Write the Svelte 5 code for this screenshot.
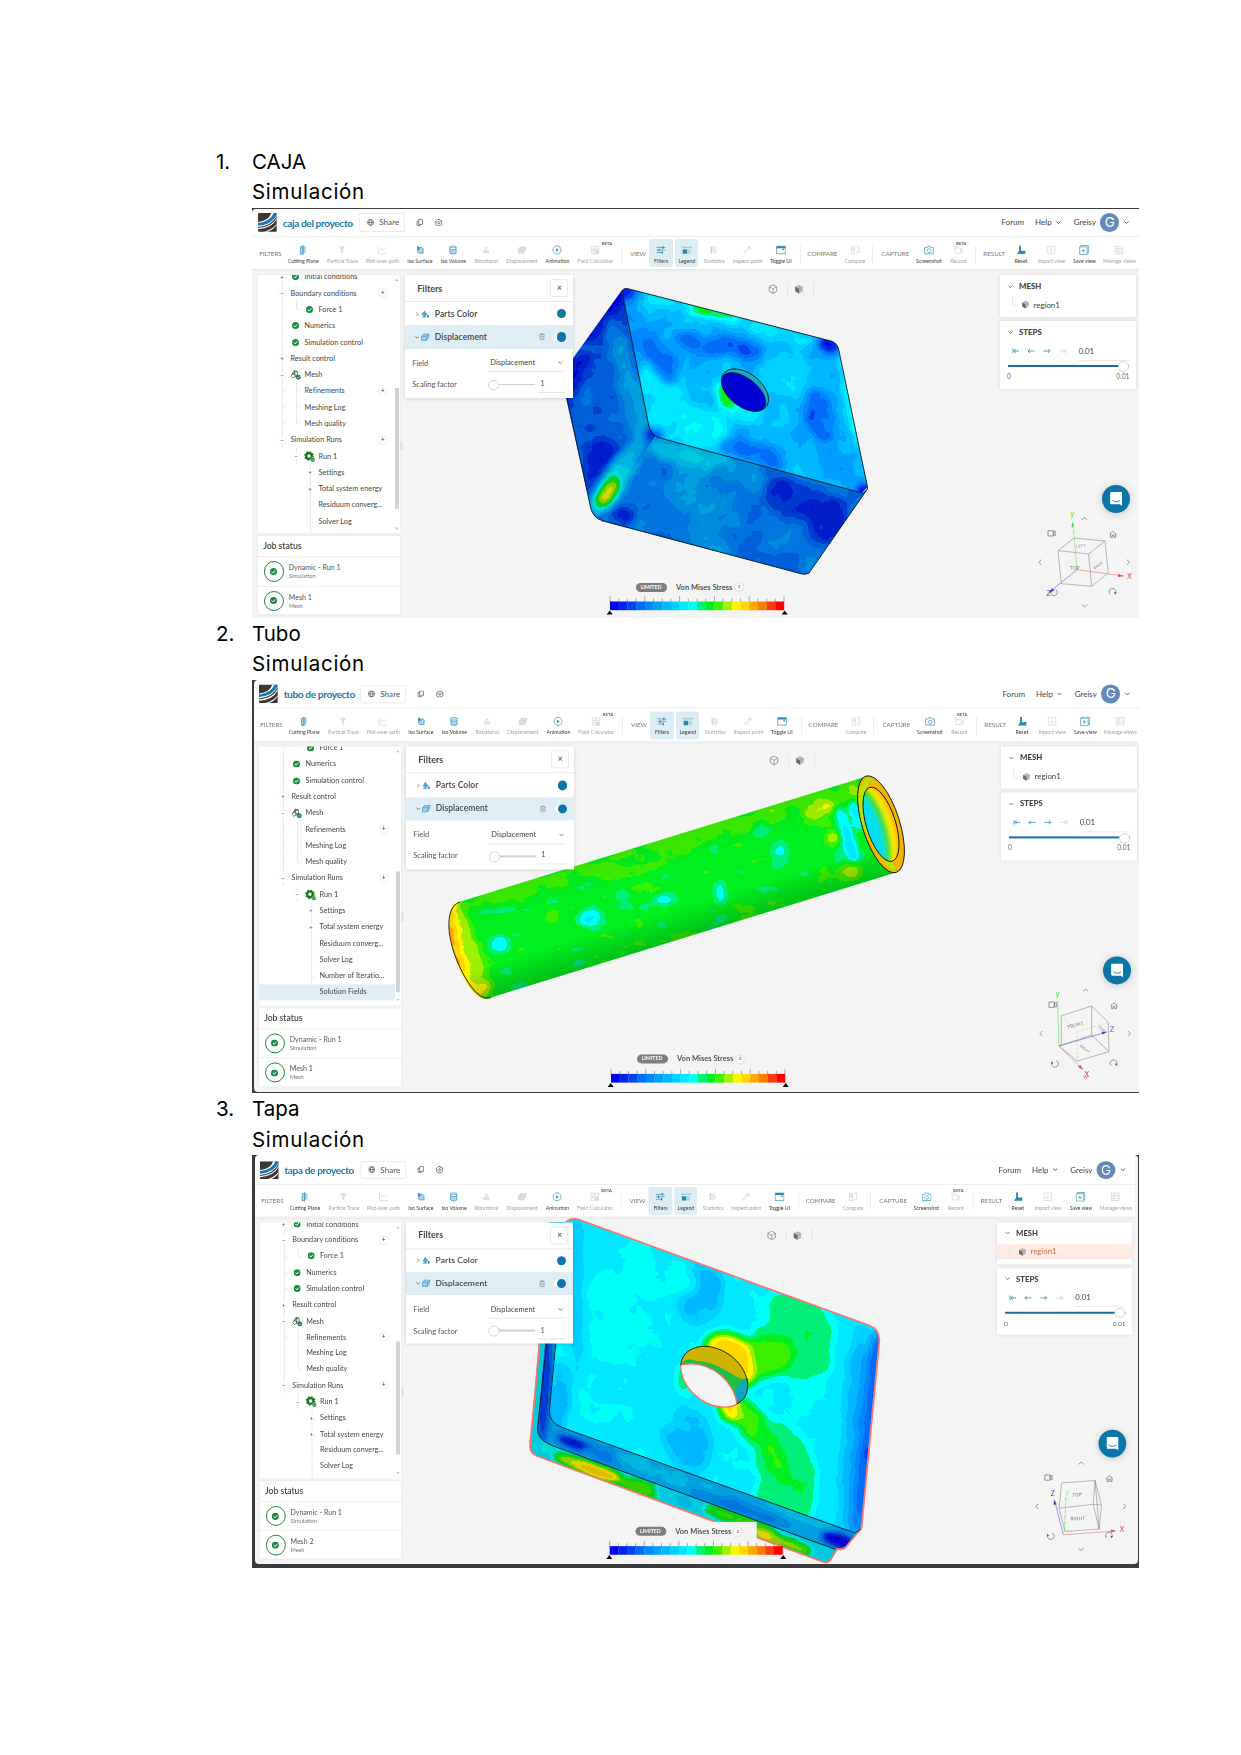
<script>
  const bands = ['#0000f0', '#0024e8', '#0044f0', '#006cf8', '#0088ff', '#00a0ff', '#00b8ff', '#00d0ff', '#00e8ff', '#00fff6', '#00f078', '#00f01e', '#3cf000', '#a0f000', '#fff400', '#ffd800', '#ffa800', '#ff7c00', '#f83c10', '#ff0000'];
  const chan = (o) => bands.map((b) => (parseInt(b.slice(o, o + 2), 16) / 255).toFixed(3)).join(' ');
  const red = chan(1), green = chan(3), blue = chan(5);
  const grey = (v) => { const n = Math.round(v * 255); return `rgb(${n},${n},${n})`; };

  // kind: s = section caption, | = divider, on / off / active = tool state
  const tools = [
    ['s', 'FILTERS', 26], ['on', 'Cutting Plane', 39.4, 'plane'], ['off', 'Particle Trace', 39.2, 'trace'], ['off', 'Plot-over-path', 40.8, 'plot'],
    ['on', 'Iso Surface', 34.2, 'surface'], ['on', 'Iso Volume', 32.8, 'volume'], ['off', 'Rotational', 32.6, 'rotate'], ['off', 'Displacement', 38.6, 'sheet'],
    ['on', 'Animation', 32.8, 'play'], ['off', 'Field Calculator', 42.6, 'calc', 'BETA'], ['|', '', 10], ['s', 'VIEW', 23],
    ['active', 'Filters', 23.5, 'sliders'], ['gap', '', 2.3], ['active', 'Legend', 23.2, 'legend'], ['off', 'Statistics', 31.4, 'stats'], ['off', 'Inspect point', 35.2, 'picker'],
    ['on', 'Toggle UI', 31.8, 'window'], ['|', '', 6.6], ['s', 'COMPARE', 38], ['off', 'Compare', 27, 'compare'], ['|', '', 9], ['s', 'CAPTURE', 36],
    ['on', 'Screenshot', 31, 'camera'], ['off', 'Record', 28, 'record', 'BETA'], ['|', '', 5.5], ['s', 'RESULT', 32.5], ['on', 'Reset', 21, 'reset'],
    ['off', 'Import view', 40, 'import'], ['on', 'Save view', 26, 'save'], ['off', 'Manage views', 44, 'manage']
  ];

  // each icon: [stroked path, filled path, tinted path] on a 16 unit grid
  const icons = {
    plane: ['M8 0v16M4 3l4-1v12l-4 1z', '', 'M4 3l4-1v12l-4 1zM8.500 2.500l4-1v11l-4 1z'],
    trace: ['', 'M6 6h4l-1 7H7z', 'M4 2h8v4H4zM6 6h4l-1 7H7z'],
    plot: ['M2 2v12h13M4 10l3-5 3 4 4-5', '', ''],
    surface: ['M4 2v9l2 2h7V6l-2-2H7z', 'M4 2l3 2v4l-3-1z', 'M4 2l3 2h4l2 2v7H6l-2-2z'],
    volume: ['M3 3v10c2 2 8 2 10 0V3M3 3c2 2 8 2 10 0M3 3c2-2 8-2 10 0M3 6c2 2 8 2 10 0', '', 'M3 6c2 2 8 2 10 0v7c-2 2-8 2-10 0z'],
    rotate: ['', 'M6 3h4v4H6zM5 9h6v3H5z', 'M3 8h10v5H3z'],
    sheet: ['M2 7l3-4h9l-1 6-3 4H2zM2 7h9l3-4M11 7l-1 6', '', 'M2 7l3-4h9l-1 6-3 4H2z'],
    play: ['M8 1.500a6.500 6.500 0 1 0 .1 0z', 'M6.500 5v6l4-3z', ''],
    calc: ['M2 2h5v5H2zM9 2h5v5H9zM2 9h5v5H2zM9 9h5v5H9z', '', 'M9 9h5v5H9z'],
    sliders: ['M1 4h14M1 8h14M1 12h10', 'M10 2h2v4h-2zM4 6h2v4H4zM9 10h2v4H9z', ''],
    legend: ['M2 2v3M5 3v2M8 3v2M11 3v2M14 2v3', 'M1 7h7v7H1z', 'M8 7h6v7H8z'],
    stats: ['M4 2v12M6 3h4v3H6zM6 8h6v3H6zM7 13h3', '', 'M2 3h3v10H2z'],
    picker: ['M3 13l1-3 6-6 2 2-6 6z', 'M9 3l2-2 4 4-3 2z', ''],
    window: ['M1 2h14v12H1z', 'M1 2h14v3H1zM10 6h3v2h-3z', ''],
    compare: ['M2 2h5v12H2zM10 2h4v10h-4', '', 'M3 4h3v5H3z'],
    camera: ['M1 4h4l1-2h4l1 2h4v10H1zM8 6a3 3 0 1 0 .1 0', '', ''],
    record: ['M3 5h9v8H3zM1 4V2h8M12 8l3-1v5l-3-1', '', ''],
    reset: ['M2 14h12', 'M5 1h3v7l4 3v3H2l3-5zM11 9h4v5h-4z', ''],
    import: ['M2 2h12v12H2zM8 4v7M5 8l3 3 3-3', '', ''],
    save: ['M1 3h12v12H1zM3 3V1h12v12h-2M7 6v6M4 9h6', '', ''],
    manage: ['M2 2h12v12H2zM2 6h12M2 10h12M6 2v12', '', '']
  };

  // slot letters: - / + expander, l guide, L guide corner, c check, m mesh, g gear, _ blank
  const head = [['+c', 'Initial conditions'], ['-', 'Boundary conditions', 1], ['lLc', 'Force 1']];
  const middle = [['lc', 'Numerics'], ['lc', 'Simulation control'], ['+', 'Result control'], ['-m', 'Mesh'], ['ll', 'Refinements', 1], ['ll', 'Meshing Log'], ['lL', 'Mesh quality'], ['-', 'Simulation Runs', 1], ['_-g', 'Run 1'], ['__+', 'Settings'], ['__+', 'Total system energy'], ['__l', 'Residuum converg...'], ['__l', 'Solver Log']];
  const tail = [['__l', 'Number of Iteratio...'], ['__L', 'Solution Fields', 0, 1]];

  const screens = [
    { id: 'caja', n: 1, name: 'CAJA', title: 'caja del proyecto', rows: [...head, ...middle, ['__l', '']], jobs: ['Mesh 1'] },
    { id: 'tubo', n: 2, name: 'Tubo', title: 'tubo de proyecto', rows: [['lLc', 'Force 1'], ...middle, ...tail], jobs: ['Mesh 1'] },
    { id: 'tapa', n: 3, name: 'Tapa', title: 'tapa de proyecto', rows: [...head, ...middle, ['__l', '']], jobs: ['Mesh 2'] }
  ];

  // scalar blobs: cx, cy, rx, ry, angle, value
  const boxTop = [
    [640, 345, 10, 48, -14, .24], [665, 398, 22, 42, -25, .42], [688, 425, 44, 22, 15, .44], [700, 345, 30, 10, 15, .18], [738, 347, 26, 10, 18, .17], [664, 360, 13, 28, -18, .18],
    [664, 330, 12, 12, 0, .3], [705, 311, 62, 7, 15, .45], [714, 312, 27, 5, 15, .62], [775, 332, 40, 9, 16, .39], [745, 402, 24, 22, 0, .43], [725, 396, 8, 14, -30, .6], [775, 385, 22, 22, 0, .38], [790, 365, 24, 10, 10, .37],
    [820, 415, 15, 28, -15, .17], [752, 453, 36, 12, 14, .18], [800, 450, 18, 18, 0, .3], [780, 425, 14, 18, 0, .36], [852, 400, 7, 50, -12, .46], [853, 420, 3.5, 24, -12, .6],
    [830, 345, 12, 8, 30, .06], [622, 292, 16, 9, 0, .06], [866, 490, 10, 7, 0, .02], [720, 460, 40, 4, 15, .44], [838, 466, 14, 14, 0, .25], [655, 434, 7, 6, 0, .1]
  ];
  const boxLeft = [[605, 315, 9, 34, 35, .03], [578, 372, 7, 24, 25, .04], [615, 350, 9, 40, -5, .2], [637, 410, 10, 42, -10, .42], [628, 385, 9, 50, -10, .3], [598, 410, 20, 22, 0, .19], [605, 460, 20, 20, 0, .07], [590, 480, 6, 16, -10, .09], [616, 478, 12, 44, 33, .46], [608, 494, 9, 17, 30, .74], [633, 455, 8, 20, 35, .36], [596, 510, 9, 6, 0, .4], [652, 434, 9, 6, 0, .1]];
  const boxFront = [[690, 455, 50, 12, 15, .39], [690, 490, 28, 26, 10, .3], [715, 520, 26, 38, -5, .29], [650, 490, 10, 22, 30, .21], [655, 525, 26, 12, 15, .22], [800, 500, 38, 20, 15, .1], [830, 520, 20, 24, 25, .08], [760, 545, 38, 16, 14, .2], [624, 515, 10, 6, 15, .07], [740, 475, 28, 10, 15, .28], [616, 478, 12, 44, 33, .46], [608, 494, 9, 17, 30, .74]];
  const tube = [[458, 940, 16, 58, -17, .8], [472, 990, 18, 14, -20, .74], [470, 950, 9, 48, -17, .68], [560, 878, 110, 8, -17, .62], [740, 822, 130, 10, -17, .62], [820, 810, 16, 8, -17, .7], [833, 838, 7, 6, 0, .72], [850, 795, 10, 24, -17, .65], [590, 918, 12, 8, -10, .44], [500, 945, 10, 9, 0, .46], [622, 895, 8, 5, -20, .46], [665, 898, 10, 6, 0, .46], [780, 855, 9, 13, 0, .46], [760, 832, 7, 5, 0, .46], [720, 893, 5, 12, 0, .46], [847, 835, 6, 28, -17, .4], [856, 815, 5, 16, -17, .4], [850, 872, 12, 9, 0, .68], [700, 940, 190, 5, -17, .62], [640, 868, 40, 7, -17, .6]];
  const plate = [
    [577, 1290, 5, 90, 0, .33], [558, 1400, 12, 40, 5, .33], [620, 1310, 34, 60, 10, .46], [700, 1293, 24, 33, 10, .34], [650, 1270, 50, 20, 20, .46], [687, 1440, 24, 36, -20, .34], [665, 1400, 16, 30, 0, .41],
    [800, 1325, 30, 42, -30, .53], [792, 1350, 42, 28, 20, .535], [762, 1358, 34, 20, -10, .62], [728, 1350, 24, 16, 15, .76], [745, 1365, 9, 22, -10, .77], [735, 1409, 15, 13, 20, .78], [756, 1428, 13, 32, -30, .63],
    [785, 1465, 28, 46, -22, .53], [785, 1500, 30, 28, 0, .54], [775, 1455, 9, 30, -25, .6], [830, 1395, 42, 20, 0, .46], [838, 1440, 13, 100, 3, .42], [853, 1430, 10, 110, 4, .32], [864, 1440, 8, 110, 5, .22], [875, 1400, 5, 80, 5, .1], [865, 1480, 4, 55, 5, .1], [682, 1380, 5, 15, 0, .55]
  ];
  const rim = [[545, 1390, 7, 60, 4, .12], [578, 1445, 24, 5, 20, .02], [610, 1458, 30, 6, 20, .22], [670, 1476, 60, 9, 20, .36], [740, 1508, 55, 5, 20, .22], [800, 1515, 40, 4, 20, .42], [840, 1541, 20, 7, 18, .01]];
  const skirt = [[550, 1450, 18, 9, 20, .45], [590, 1468, 38, 7, 19, .72], [598, 1474, 22, 5, 19, .8], [640, 1488, 24, 9, 20, .62], [680, 1500, 28, 7, 20, .4], [740, 1520, 38, 9, 20, .6], [775, 1540, 25, 6, 20, .78], [790, 1545, 25, 6, 20, .68], [822, 1553, 12, 12, 20, .42]];
</script>

{#snippet blobs(list, soft)}
  <g filter="url(#{soft})">
    {#each list as [cx, cy, rx, ry, a, v]}
      <ellipse {cx} {cy} {rx} {ry} transform="rotate({a} {cx} {cy})" fill={grey(v)} />
    {/each}
  </g>
{/snippet}

{#snippet fieldFilter(id, freq, gain, seed, x, y, w, h)}
  <filter {id} filterUnits="userSpaceOnUse" {x} {y} width={w} height={h} color-interpolation-filters="sRGB">
    <feTurbulence type="fractalNoise" baseFrequency={freq} numOctaves="3" {seed} result="n" />
    <feColorMatrix in="n" type="matrix" values="1 0 0 0 0 1 0 0 0 0 1 0 0 0 0 0 0 0 0 1" result="m" />
    <feComposite in="SourceGraphic" in2="m" operator="arithmetic" k1="0" k2="1" k3={gain} k4={-gain / 2} />
    <feComponentTransfer>
      <feFuncR type="discrete" tableValues={red} />
      <feFuncG type="discrete" tableValues={green} />
      <feFuncB type="discrete" tableValues={blue} />
    </feComponentTransfer>
    <feGaussianBlur stdDeviation=".5" />
  </filter>
{/snippet}

{#snippet cajaModel()}
  <svg class="model" viewBox="252 208 887 412">
    <defs>
      {@render fieldFilter('fCaja', '.038', .17, 4, 550, 270, 340, 320)}
      <filter id="sCaja" x="-20%" y="-20%" width="140%" height="140%" color-interpolation-filters="sRGB"><feGaussianBlur stdDeviation="4" /></filter>
      <clipPath id="cTop"><path d="M622 291Q623 288 627 288.500L832 341.300Q838 344 839 351L867.500 487 862 493 662 438.500Q651 436 649 427Z" /></clipPath>
      <clipPath id="cLeft"><path d="M622 290L566 368V398L590.500 507Q593 518 602 520.500L656 437 649 427Z" /></clipPath>
      <clipPath id="cFront"><path d="M601 521L655 436 662 438.500 862 493 867.500 489 809 573Q806 575 802 574Z" /></clipPath>
    </defs>
    <g clip-path="url(#cLeft)"><g filter="url(#fCaja)"><rect x="550" y="270" width="340" height="320" fill={grey(.16)} />{@render blobs(boxLeft, 'sCaja')}</g><rect x="550" y="270" width="340" height="320" class="shade" /></g>
    <g clip-path="url(#cFront)"><g filter="url(#fCaja)"><rect x="550" y="270" width="340" height="320" fill={grey(.22)} />{@render blobs(boxFront, 'sCaja')}</g><rect x="550" y="270" width="340" height="320" class="shade" /></g>
    <g clip-path="url(#cTop)"><g filter="url(#fCaja)"><rect x="550" y="270" width="340" height="320" fill={grey(.32)} />{@render blobs(boxTop, 'sCaja')}</g></g>
    <g class="edge">
      <path d="M622 291Q623 288 627 288.500L832 341.300Q838 344 839 351L867.500 487Q868 489 866 491L809 573Q806 575 802 574L602 520.500Q593 518 590.500 507L567 398" />
      <path d="M622 291L649 427Q651 436 662 438.500L862 493" />
    </g>
    <ellipse cx="745" cy="390" rx="27" ry="16.500" transform="rotate(38 745 390)" fill="#19a8bd" stroke="#101820" stroke-width=".8" />
    <ellipse cx="743.500" cy="392" rx="26" ry="14" transform="rotate(38 743.500 392)" fill="#0000d2" stroke="#101820" stroke-width=".6" />
  </svg>
{/snippet}

{#snippet tuboModel()}
  <svg class="model" viewBox="252 680 887 412">
    <defs>
      {@render fieldFilter('fTubo', '.03 .06', .12, 9, 430, 760, 490, 250)}
      <filter id="sTubo" x="-20%" y="-20%" width="140%" height="140%" color-interpolation-filters="sRGB"><feGaussianBlur stdDeviation="3.500" /></filter>
      <filter id="b3"><feGaussianBlur stdDeviation="2.200" /></filter>
      <clipPath id="cTube"><path d="M459 902L868 776A18.700 50.500 -17.500 0 1 895 872.700L486 999A18.700 50.500 -17.500 0 1 459 902Z" /></clipPath>
      <clipPath id="cBore"><ellipse cx="881" cy="824.300" rx="14.700" ry="38.600" transform="rotate(-17 881 824.300)" /></clipPath>
      <linearGradient id="gTube" gradientUnits="userSpaceOnUse" x1="660" y1="838" x2="690" y2="937">
        <stop offset="0" stop-opacity=".05" /><stop offset=".3" stop-opacity="0" /><stop offset=".7" stop-opacity="0" /><stop offset="1" stop-opacity=".2" />
      </linearGradient>
    </defs>
    <g clip-path="url(#cTube)">
      <g filter="url(#fTubo)"><rect x="430" y="760" width="490" height="250" fill={grey(.578)} />{@render blobs(tube, 'sTubo')}</g>
      <rect x="430" y="760" width="490" height="250" fill="url(#gTube)" />
    </g>
    <ellipse cx="881" cy="824.300" rx="18.700" ry="50.500" transform="rotate(-17.500 881 824.300)" fill="#f4b400" />
    <path d="M868 777Q853 790 861 818T893 872L896 868Q874 846 868 812T875 780Z" fill="#b4e600" />
    <g clip-path="url(#cBore)">
      <rect x="855" y="780" width="50" height="90" fill="#ffb000" />
      <g filter="url(#b3)">
        <ellipse cx="876" cy="828" rx="17" ry="44" transform="rotate(-17 876 828)" fill="#ffee00" />
        <ellipse cx="872.500" cy="829" rx="15" ry="44" transform="rotate(-17 872.500 829)" fill="#30e020" />
        <ellipse cx="868" cy="832" rx="13.500" ry="40" transform="rotate(-17 868 832)" fill="#00e0f0" />
      </g>
    </g>
    <g class="edge">
      <ellipse cx="881" cy="824.300" rx="18.700" ry="50.500" transform="rotate(-17.500 881 824.300)" />
      <ellipse cx="881" cy="824.300" rx="14.700" ry="38.600" transform="rotate(-17 881 824.300)" />
      <path d="M460 902C446 906 445 933 458 963C468 986 480 1001 491 997.500" />
    </g>
  </svg>
{/snippet}

{#snippet tapaModel()}
  <svg class="model" viewBox="252 1155 887 412">
    <defs>
      {@render fieldFilter('fTapa', '.04', .06, 3, 520, 1210, 370, 360)}
      <filter id="sTapa" x="-20%" y="-20%" width="140%" height="140%" color-interpolation-filters="sRGB"><feGaussianBlur stdDeviation="5" /></filter>
      <filter id="sRim" x="-20%" y="-20%" width="140%" height="140%" color-interpolation-filters="sRGB"><feGaussianBlur stdDeviation="3" /></filter>
      <clipPath id="cPlate"><path d="M566 1222Q572 1217 580 1220L868 1325Q880 1329 879 1341L861.500 1528 855 1533 562 1427.500Q549 1423 549.500 1410Z" /></clipPath>
      <clipPath id="cRim"><path d="M555 1222L537.500 1428Q537 1440 552 1445.500L835 1549.300H843L861.500 1528 855 1533 562 1427.500Q549 1423 549.500 1410L566 1222Z" /></clipPath>
      <clipPath id="cSkirt"><path d="M549 1222L530 1446Q530 1453 537 1456L822 1561.500Q828 1564 831 1559L837 1549 552 1445.500Q537 1440 537.500 1428L555 1222Z" /></clipPath>
    </defs>
    <g clip-path="url(#cSkirt)"><g filter="url(#fTapa)"><rect x="520" y="1210" width="370" height="360" fill={grey(.42)} />{@render blobs(skirt, 'sRim')}</g><rect x="520" y="1210" width="370" height="360" class="shade" /></g>
    <g clip-path="url(#cRim)"><g filter="url(#fTapa)"><rect x="520" y="1210" width="370" height="360" fill={grey(.32)} />{@render blobs(rim, 'sRim')}</g><rect x="520" y="1210" width="370" height="360" class="shade" /></g>
    <g clip-path="url(#cPlate)"><g filter="url(#fTapa)"><rect x="520" y="1210" width="370" height="360" fill={grey(.445)} />{@render blobs(plate, 'sTapa')}</g></g>
    <path d="M566 1222Q572 1217 580 1220L868 1325Q880 1329 879.300 1341L861.500 1528 846 1547Q843 1550 837 1549L831 1559Q828 1564 822 1561.500L537 1456Q530 1453 530 1446L541 1330" class="halo" />
    <g class="edge">
      <path d="M547 1340L537.500 1428Q537 1440 552 1445.500L835 1549.300M556 1340L549.500 1410Q549 1423 562 1427.500L855 1533 861 1529" />
    </g>
    <path d="M680.700 1365C682 1352 693 1346 706 1346.300C730 1348 749 1369 747.700 1388Q746 1400 736.700 1404C736 1385 712 1358 680.700 1365Z" fill="#cdb400" />
    <path d="M680.700 1365Q686 1356 697 1361C724 1362 738 1384 748 1378Q750 1398 736.700 1404C736 1385 712 1358 680.700 1365Z" fill="#1fbf45" />
    <path d="M735 1389L745 1378 747.700 1388Q746 1400 736.700 1404Z" fill="#12a5c0" />
    <path d="M736.700 1404C736 1385 712 1358 680.700 1365C680 1384 699 1406 722 1407Q732 1407.500 736.700 1404Z" fill="#f4f4f4" stroke="#f0705c" stroke-width="1.200" />
    <path d="M680.700 1365C682 1352 693 1346 706 1346.300C730 1348 749 1369 747.700 1388Q746 1400 736.700 1404" class="edge" />
  </svg>
{/snippet}

{#snippet cube(id)}
  {#if id === 'caja'}
    <g class="wire"><path d="M235 243L283 205 376 214 327 253ZM235 243L245 342 336 350 327 253M376 214L386 310 336 350" /></g>
    <path d="M292 300L280 160" class="ax g" stroke-dasharray="18 3" /><path d="M275 172l4-16 4 15z" fill="#4bd44b" />
    <path d="M292 300L432 319" class="ax r" /><path d="M415 313l18 6-18 3z" fill="#e05050" /><path d="M292 300L212 365" class="ax b" /><path d="M217 355l-8 14 16-7z" fill="#4848c0" />
    <text x="277" y="143" class="al" fill="#3fe03f">y</text><text x="450" y="329" class="al" fill="#e84848">X</text><text x="207" y="378" class="al" fill="#3838c0">Z</text>
    <text x="285" y="302" class="face">TOP</text><text transform="translate(304 233) rotate(-4)" class="face sm">LEFT</text><text transform="translate(358 290) rotate(-38)" class="face sm">BACK</text>
  {:else if id === 'tubo'}
    <g class="wire"><path d="M242 224L333 195 333 282 235 315 242 312ZM333 195L383 244 385 332 333 282M385 332L290 360 235 315" /><path d="M242 224L290 272 383 244M290 272V360" stroke-dasharray="6 6" stroke-opacity=".5" /></g>
    <path d="M235 315L231 180" class="ax g" /><path d="M235 315L378 273" class="ax b" /><path d="M362 272l18 0-14 8z" fill="#4848c0" /><path d="M235 315L305 384" class="ax r" /><path d="M292 378l16 9-9-16z" fill="#e05050" />
    <text x="231" y="169" class="al" fill="#3fe03f">y</text><text x="394" y="273" class="al" fill="#5050d0">Z</text><text x="318" y="408" class="al" fill="#e84848">X</text>
    <text transform="translate(286 257) rotate(-15)" class="face">FRONT</text><text transform="translate(310 327) rotate(40)" class="face sm">RIGHT</text><text transform="translate(360 266) rotate(45)" class="face sm">TOP</text>
  {:else}
    <g class="wire"><path d="M256 207L357 200 351 272 248 284ZM357 200L376 274 369 347 266 354 248 284M351 272L369 347M351 272L376 274M357 200L369 347" /></g>
    <path d="M261 364L234 259" class="ax b" /><path d="M231 274l2-17 8 15z" fill="#4848c0" /><path d="M264 354L269 249" class="ax g" stroke-dasharray="14 4" /><path d="M261 364L418 353" class="ax r" /><path d="M404 348l16 4-15 5z" fill="#e05050" />
    <text x="229" y="248" class="al" fill="#4040d0">Z</text><text x="273" y="240" class="al" fill="#8be88b">y</text><text x="438" y="357" class="al" fill="#e84848">X</text>
    <text transform="translate(303 248) rotate(-3)" class="face">TOP</text><text transform="translate(305 320) rotate(-3)" class="face">RIGHT</text>
  {/if}
{/snippet}

{#snippet chevron(dir = 'down')}
  <svg class="chev {dir}" viewBox="0 0 10 10"><path d="M1 3l4 4 4-4" /></svg>
{/snippet}

{#snippet check()}
  <svg class="check" viewBox="0 0 14 14"><circle cx="7" cy="7" r="7" fill="#1c8a43" /><path d="M3.500 7l2.700 2.700 4.500-5" fill="none" stroke="#fff" stroke-width="2" /></svg>
{/snippet}

{#snippet boxIcon(solid)}
  <svg class="boxicon" viewBox="0 0 16 16"><path d="M8 1l6 3.500v7L8 15l-6-3.500v-7z" fill={solid ? '#b9b9b9' : 'none'} stroke={solid ? 'none' : '#666'} /><path d="M2 4.500L8 8v7l-6-3.500z" fill={solid ? '#6a6a6a' : 'none'} /><path d="M2 4.500L8 8l6-3.500M8 8v7" fill="none" stroke="#777" stroke-width={solid ? .5 : 1} /></svg>
{/snippet}

<main>
  {#each screens as s}
    <section class={s.id}>
      <div class="line"><span class="num">{s.n}.</span><span>{s.name}</span></div>
      <div class="line"><span class="num"></span><span class="sub">Simulación</span></div>
      <div class="frame">
        {#if s.id === 'caja'}{@render cajaModel()}{:else if s.id === 'tubo'}{@render tuboModel()}{:else}{@render tapaModel()}{/if}
        <div class="stage">
          <header>
            <svg class="logo" viewBox="0 0 56 56">
              <rect width="56" height="56" rx="3" fill="#3b3735" />
              <path d="M0 27Q32 24 40 0H56V8Q42 38 0 42Z" fill="#fff" /><path d="M0 30Q36 26 47 0H56V5Q42 35 0 38Z" fill="#1a78b4" />
              <path d="M0 45Q42 42 56 14V18Q42 46 0 49ZM18 56Q42 50 56 33V37Q46 50 30 56Z" fill="#fff" />
            </svg>
            <b class="title">{s.title}</b>
            <div class="share"><svg viewBox="0 0 14 14"><circle cx="7" cy="7" r="6" /><path d="M1 7h12M7 1c-4 4-4 8 0 12c4-4 4-8 0-12" /></svg>Share</div>
            <svg class="hicon" viewBox="0 0 14 14"><path d="M5 1h7v9H5zM5 4H2v8h6v-2" /></svg>
            <svg class="hicon gearout" viewBox="0 0 14 14"><path d="M5 1h4l1 2h2l1 3-1 2 1 2-2 2H9l-2 1-2-1H3l-2-2 1-2-1-3 2-2 1-1zM7 5a2 2 0 1 0 .1 0z" /></svg>
            <div class="account"><span class="forum">Forum</span><span class="help">Help</span>{@render chevron()}<span class="user">Greisy</span><i>G</i>{@render chevron()}</div>
          </header>
          <nav>
            {#each tools as [kind, label, w, icon, badge]}
              <div class="tool k{kind === 's' ? 'cap' : kind === '|' ? 'div' : kind}" style:width="{w}px">
                {#if icon}
                  <svg viewBox="0 0 16 16"><path d={icons[icon][2]} class="tint" /><path d={icons[icon][1]} class="solid" /><path d={icons[icon][0]} class="out" /></svg>
                {/if}
                {#if badge}<em>{badge}</em>{/if}
                {#if label}<span>{label}</span>{/if}
              </div>
            {/each}
          </nav>
          <div class="work">
            <aside>
              <div class="tree">
                <div class="rows">
                  {#each s.rows as [slots, label, add, sel]}
                    <div class="row" class:sel>
                      {#each slots.split('') as c}
                        <span class="slot" class:guide={c === 'l'} class:corner={c === 'L'} class:node={c === '-' || c === '+'}>
                          {#if c === '-' || c === '+'}<u>{c === '-' ? '−' : '+'}</u>
                          {:else if c === 'c'}{@render check()}
                          {:else if c === 'm'}
                            <svg class="big" viewBox="0 0 20 20"><path d="M4 9l4-6 5 1 1 8-9 4-3-3zM4 9l10 3M8 3l1 11M4 9l9-5" fill="none" stroke="#3c5a44" stroke-width="1.400" /><circle cx="15" cy="15" r="4.500" fill="#1c8a43" /><path d="M13 15l1.500 1.500 2.500-3" fill="none" stroke="#fff" /></svg>
                          {:else if c === 'g'}
                            <svg class="big" viewBox="0 0 20 20"><circle cx="9" cy="9" r="5.200" fill="none" stroke="#147a1e" stroke-width="4" /><circle cx="9" cy="9" r="7.600" fill="none" stroke="#147a1e" stroke-width="2.400" stroke-dasharray="3 2.970" /><circle cx="16" cy="16" r="4" fill="#1c8a43" stroke="#fff" stroke-width=".6" /><path d="M14 16l1.500 1.500 2.500-3" fill="none" stroke="#fff" /></svg>
                          {/if}
                        </span>
                      {/each}
                      <span class="lbl">{label}</span>
                      {#if add}<span class="add">+</span>{/if}
                    </div>
                  {/each}
                </div>
                <div class="scroll"><svg viewBox="0 0 6 6"><path d="M0 5l3-4 3 4z" /></svg><div class="thumb"></div><svg viewBox="0 0 6 6"><path d="M0 1l3 4 3-4z" /></svg></div>
              </div>
              <div class="jobs">
                <h3>Job status</h3>
                {#each [['Dynamic - Run 1', 'Simulation'], [s.jobs[0], 'Mesh']] as [a, b]}
                  <div class="job"><span class="ring">{@render check()}</span><div><p>{a}</p><small>{b}</small></div></div>
                {/each}
              </div>
            </aside>
            <div class="grip"></div>
            <div class="filters">
              <div class="fhead"><b>Filters</b><span class="close">×</span></div>
              <div class="frow">{@render chevron('east')}<svg class="fi" viewBox="0 0 16 16"><path d="M1 8l6-6 5 6-5 5z" fill="#5aa7cc" /><path d="M4 5l4-4M12 9l2 4M2 13h8" stroke="#2d7fae" fill="none" stroke-width="1.500" /><circle cx="13" cy="12" r="2" fill="#2d7fae" /></svg><b>Parts Color</b><span class="dot"></span></div>
              <div class="frow picked">{@render chevron()}<svg class="fi" viewBox="0 0 16 16"><path d="M1 6l4-4h10l-1 7-4 5H1z" fill="#9fd0ea" stroke="#2d86b8" /><path d="M1 6h10l4-4M11 6l-1 8" fill="none" stroke="#2d86b8" /></svg><b>Displacement</b><svg class="bin" viewBox="0 0 12 14"><path d="M1 3h10M2 3v10h8V3M4 3V1h4v2M4.500 5.500v5M7.500 5.500v5" /></svg><span class="dot"></span></div>
              <div class="prop field"><span>Field</span><div class="select">Displacement{@render chevron()}</div></div>
              <div class="prop"><span>Scaling factor</span><div class="slider"></div><div class="value">1</div></div>
            </div>
            <div class="right">
              <div class="card mesh">
                <div class="chead">{@render chevron()}<b>MESH</b></div>
                <div class="region"><span class="elbow"></span>{@render boxIcon(true)}region1</div>
              </div>
              <div class="card steps">
                <div class="chead">{@render chevron()}<b>STEPS</b></div>
                <div class="arrows">
                  <svg viewBox="0 0 16 12"><path d="M2 1v10M15 6H4M8 2L4 6l4 4" /></svg><svg viewBox="0 0 16 12"><path d="M15 6H2M6 2L2 6l4 4" /></svg><svg viewBox="0 0 16 12"><path d="M1 6h13M10 2l4 4-4 4" /></svg><svg class="dim" viewBox="0 0 16 12"><path d="M1 6h11M8 2l4 4-4 4M14 1v10" /></svg>
                  <span>0.01</span>
                </div>
                <div class="range"></div>
                <div class="ends"><span>0</span><span>0.01</span></div>
              </div>
            </div>
          </div>
          <div class="viewtools">{@render boxIcon(false)}<hr />{@render boxIcon(true)}<hr /></div>
          <div class="legend">
            <div class="caption"><span class="pill">LIMITED</span><span>Von Mises Stress</span><span class="menu">≡</span></div>
            <svg viewBox="0 0 184 19">
              {#each Array(21) as _, i}<path d="M{5 + i * 8.7} {i % 4 === 0 ? 0 : 2.500}V6" stroke="#777" stroke-width=".6" />{/each}
              {#each bands as c, i}<rect x={5 + i * 8.7} y="5.500" width="8.900" height="8.700" fill={c} />{/each}
              <path d="M4.700 14.500l3 4h-6zM179.700 14.500l3 4h-6z" />
            </svg>
          </div>
          <div class="chat"><svg viewBox="0 0 14 16"><path d="M1.500 0h11a1.500 1.500 0 0 1 1.500 1.500V16l-3-2H1.500A1.500 1.500 0 0 1 0 12.500v-11A1.500 1.500 0 0 1 1.500 0z" fill="#fff" /><path d="M2.500 9.500q4.500 3.500 9 0" fill="none" stroke="#0d76a8" /></svg></div>
          <svg class="orient" viewBox="160 115 310 310">
            <g class="ctl">
              <path d="M307 151l8-7 8 7M307 405l8 7 8-7M185 270l-7 8 7 8M442 270l7 8-7 8" />
              <path d="M205 183h16v16h-16zM221 187l6-3v14l-6-3zM390 194l10-9 10 9M393 192v11h5v-7h5v7h5v-11" />
              <path d="M215 362a10 10 0 1 0 12-3M392 374a10 10 0 1 1 16-4" /><path d="M211 370l1-8 6 4zM407 375l4-7-8 0z" fill="#555" stroke="none" />
            </g>
            {@render cube(s.id)}
          </svg>
        </div>
      </div>
    </section>
  {/each}
</main>

<style>
  :global(body) { background: #fff; }
  main { box-sizing: border-box; width: 1241px; height: 1755px; padding: 146.500px 0 0; overflow: hidden; font-family: Lato, sans-serif; color: #444; }
  section { width: 887px; margin-left: 252px; }
  .tubo, .tapa { margin-top: 1.300px; }
  .line { display: flex; height: 30.500px; line-height: 30.500px; margin-left: -36px; font-family: Inter, sans-serif; font-size: 20.500px; color: #000; }
  .num { width: 36px; }
  .sub { letter-spacing: .72px; }
  .frame { position: relative; height: 410px; overflow: hidden; background: #f4f4f4; }
  .tubo .frame, .tapa .frame { height: 413px; }
  .frame::after { content: ''; position: absolute; inset: 1px 0 0; border-radius: 4px 0 0; box-shadow: 0 0 0 10px #3b3b3e; pointer-events: none; }
  .tubo .frame::after { inset: 0 0 1px 2px; border-radius: 4px 0 0 4px; }
  .tapa .frame::after { inset: 0 1px 4px 3px; border-radius: 4px; }
  .model { position: absolute; left: 0; top: 0; width: 887px; height: 412px; }
  .shade { fill: #000; fill-opacity: .13; }
  .edge, .edge * { fill: none; stroke: #101820; stroke-width: .9; }
  .halo { fill: none; stroke: #f8776a; stroke-width: 1.800; }
  .stage { position: relative; width: 887px; height: 410px; transform-origin: 0 0; }
  .tubo .stage { transform: translate(1px, -.6px); }
  .tapa .stage { transform: translate(2px, .2px) scale(.9935, .991); }
  svg { display: block; flex: none; }

  header { box-sizing: border-box; display: flex; align-items: center; height: 29.600px; padding: 1.300px 10px 0 6.300px; background: #fff; border-bottom: 1px solid #ececec; }
  .logo { width: 18.700px; height: 18.700px; margin-right: 5.700px; }
  .title { width: 76px; padding-top: 1px; font-size: 10.200px; font-weight: 700; letter-spacing: -.4px; color: #1b78a8; white-space: nowrap; }
  .share { box-sizing: border-box; display: flex; align-items: center; gap: 5.500px; width: 46.500px; height: 18.400px; padding-left: 7px; border: 1px solid #ececec; border-radius: 2px; font-size: 8px; letter-spacing: .1px; color: #555; }
  .share svg { width: 7px; height: 7px; fill: none; stroke: #444; stroke-width: 1.300; }
  .hicon { width: 7.500px; height: 7.500px; margin-left: 10.500px; fill: none; stroke: #555; stroke-width: 1.300; }
  .gearout { margin-left: 12px; stroke-width: 1.600; }
  .account { display: flex; align-items: center; margin-left: auto; font-size: 8px; color: #444; }
  .account .chev { stroke-width: 2; }
  .help { margin: 0 4px 0 11px; }
  .user { margin: 0 4.500px 0 13px; }
  .account i { width: 18.600px; height: 18.600px; margin-right: 5px; border-radius: 50%; background: #6689bb; color: #fff; font: 13.500px/18.600px Inter, sans-serif; text-align: center; }
  .chev { width: 5px; height: 5px; fill: none; stroke: #555; stroke-width: 1.600; }
  .chev.east { transform: rotate(-90deg); }

  nav { box-sizing: border-box; display: flex; align-items: center; height: 33.400px; padding-left: 5.500px; background: #fff; border-bottom: 1px solid #e6e6e6; box-shadow: 0 1px 2px #0000000a; }
  .tool { position: relative; box-sizing: border-box; display: flex; flex: none; flex-direction: column; align-items: center; justify-content: center; gap: 3px; height: 28px; padding-top: 2px; font-size: 5.250px; line-height: 6px; white-space: nowrap; color: #3c3c3c; }
  .tool svg { width: 10px; height: 10px; }
  .tool .out { fill: none; stroke: #3590b6; stroke-width: 1.100; }
  .tool .solid { fill: #2a87ad; }
  .tool .tint { fill: #a9d6ee; }
  .koff { color: #a2a2a2; }
  .koff .out { stroke: #d2d2d2; }
  .koff .solid, .koff .tint { fill: #e0e0e0; }
  .kactive { background: #deedf4; border-radius: 2px; }
  .kcap { padding-top: 1px; font-size: 6.250px; color: #777; }
  .kdiv::after { content: ''; width: 1px; height: 17px; background: #ececec; }
  .tool em { position: absolute; left: calc(50% + 5px); top: 1.500px; padding: 0 1.500px; border-radius: 3px; background: #fff; font: 700 4.300px/5px Lato, sans-serif; color: #666; box-shadow: 0 0 1px #ddd; }
  .tool:nth-child(25) em { left: calc(50% - 4px); }

  .work { display: flex; align-items: flex-start; padding: 4.700px 2.700px 0 5.700px; }
  aside { width: 142.300px; }
  .tree { position: relative; height: 258.300px; overflow: hidden; background: #fff; box-shadow: 0 0 2px #00000014; }
  .rows { margin-top: -6.500px; }
  .tubo .rows { margin-top: -7.100px; }
  .row { display: flex; align-items: center; height: 16.300px; width: 136px; padding-left: 17.300px; box-sizing: border-box; font-size: 7.250px; letter-spacing: .04px; white-space: nowrap; }
  .row.sel { background: #e0edf4; }
  .slot { position: relative; display: grid; place-items: center; width: 14px; height: 16.300px; flex: none; }
  .guide::before, .node::before, .corner::before { content: ''; position: absolute; left: 7px; top: 0; width: 1px; height: 16.300px; background: #e9e9e9; }
  .guide::after, .corner::after { content: ''; position: absolute; left: 7px; top: 8px; width: 4px; height: 1px; background: #efefef; }
  .corner::before { height: 8px; }
  .slot u { position: relative; width: 6px; height: 6px; background: #fff; box-shadow: 0 0 1px #ddd; font: 700 6px/5.600px Lato, sans-serif; text-align: center; text-decoration: none; color: #666; }
  .check { width: 7px; height: 7px; }
  .big { width: 11px; height: 11px; }
  .lbl { padding-left: 1.500px; flex: 1; }
  .add { width: 8px; height: 8px; margin-right: 7px; border-radius: 50%; box-shadow: 0 0 1.500px #c4c4c4; font-size: 7px; line-height: 7.400px; text-align: center; }
  .scroll { position: absolute; right: 1.200px; top: 3px; bottom: 3px; width: 3.500px; display: flex; flex-direction: column; justify-content: space-between; }
  .scroll svg { width: 3.500px; height: 3.500px; fill: #c4c4c4; }
  .thumb { height: 121px; margin-top: 88px; background: #d2d2d2; }
  .tubo .thumb { margin-top: 112px; }
  .tapa .thumb { height: 114px; margin-top: 96px; }
  .jobs { height: 78px; margin-top: 3px; background: #fff; box-shadow: 0 0 2px #00000014; }
  h3 { margin: 0; padding: 1px 0 0 5.500px; font-size: 8.600px; line-height: 19px; font-weight: 600; border-bottom: 1px solid #eee; }
  .job { box-sizing: border-box; display: flex; align-items: center; gap: 4.500px; height: 29.300px; padding-left: 6px; border-bottom: .7px solid #eee; }
  .job p { margin: 0; font-size: 7.100px; line-height: 9px; color: #555; }
  small { display: block; font-size: 5.800px; line-height: 7.500px; color: #777; }
  .ring { box-sizing: border-box; display: grid; place-items: center; width: 20.500px; height: 20.500px; border: 1.300px solid #1e8a35; border-radius: 50%; }

  .grip { width: 3.500px; height: 9px; margin: 166px 1.500px 0 0; background: #e6e6e6; }
  .filters { width: 168.500px; height: 122.700px; background: #fff; box-shadow: 0 1px 4px #00000024; }
  .fhead { box-sizing: border-box; display: flex; align-items: center; justify-content: space-between; height: 27px; padding: 0 5px 0 12.300px; border-bottom: 1px solid #e8e8e8; font-size: 9px; }
  .close { box-sizing: border-box; width: 18px; height: 18px; border: 1px solid #eaeaea; border-radius: 2px; font-size: 9px; line-height: 15px; text-align: center; }
  .frow { display: flex; align-items: center; height: 23.200px; padding-left: 10px; font-size: 8.500px; }
  .frow b { margin-left: 4.800px; font-weight: 600; letter-spacing: .08px; }
  .frow .chev { width: 4.500px; height: 4.500px; margin-right: 2px; }
  .fi { width: 8.500px; height: 8.500px; }
  .picked { background: #dfedf4; }
  .dot { width: 9.400px; height: 9.400px; margin: 0 7.300px 0 auto; border-radius: 50%; background: #0d76a8; }
  .picked .dot { box-shadow: -4px 0 0 -1px #fff; }
  .bin { width: 6px; height: 7px; margin-left: auto; fill: none; stroke: #777; }
  .bin + .dot { margin-left: 11.500px; }
  .prop { display: flex; align-items: center; height: 19px; padding: 2.500px 8px 0 7.300px; font-size: 7.500px; color: #555; }
  .prop.field { box-sizing: border-box; height: 24px; padding-top: 5.500px; }
  .prop > span { width: 76px; }
  .select { flex: 1; display: flex; align-items: center; justify-content: space-between; height: 17px; padding-left: 2px; padding-right: 2px; border-bottom: .6px solid #e6e6e6; color: #444; }
  .slider { position: relative; width: 47px; height: 1.800px; margin-right: 3px; background: linear-gradient(#d0d0d0, #d0d0d0) 5px 0 / 42px 2px no-repeat; }
  .slider::before, .range::after { content: ''; position: absolute; left: 0; top: -3.800px; width: 8.500px; height: 8.500px; border-radius: 50%; border: .6px solid #d4d4d4; background: #fff; }
  .value { flex: 1; padding-left: 2px; height: 17px; line-height: 16.500px; border-bottom: .6px solid #e6e6e6; box-sizing: border-box; }

  .right { width: 136.300px; margin-left: auto; }
  .card { background: #fff; box-shadow: 0 0 4px #0000001c; }
  .mesh { height: 42px; margin-bottom: 4px; }
  .steps { height: 67.500px; }
  .chead { display: flex; align-items: center; gap: 6px; height: 22px; padding-left: 8px; font-size: 7.800px; font-weight: 600; }
  .region { display: flex; align-items: center; height: 15.500px; font-size: 7.900px; }
  .tapa .region { background: #fdeae3; color: #d9693f; }
  .elbow { width: 4px; height: 8px; margin: -6px 4px 0 11.500px; border: solid #e6e6e6; border-width: 0 0 .7px .7px; }
  .boxicon { width: 9px; height: 9px; }
  .region .boxicon { margin-right: 4px; }
  .arrows { display: flex; align-items: center; gap: 8px; height: 16px; padding-left: 11.500px; font-size: 7.800px; }
  .arrows svg { width: 7.800px; height: 6px; fill: none; stroke: #1b7ba6; stroke-width: 1.500; }
  .arrows .dim { stroke: #ccc; }
  .arrows span { width: 50px; margin-left: 3px; padding-left: 1px; line-height: 18px; border-bottom: .6px solid #e8e8e8; }
  .range { position: relative; height: 2px; margin: 6px 7.500px 0; background: #16729c; }
  .range::after { left: auto; right: 0; }
  .ends { display: flex; justify-content: space-between; margin-top: 5px; padding: 0 7px; font-size: 6.600px; line-height: 9px; color: #666; }

  .viewtools { position: absolute; left: 515.500px; top: 74px; display: flex; align-items: center; }
  .viewtools .boxicon { width: 10px; height: 10px; }
  .viewtools hr { width: 1px; height: 14px; margin: 0 6px 0 9px; border: 0; background: #e6e6e6; }
  .legend { position: absolute; left: 353px; top: 370px; width: 184px; }
  .caption { box-sizing: border-box; display: flex; align-items: center; height: 19.500px; width: 153px; padding-left: 30.500px; font-size: 7.550px; font-weight: 600; white-space: nowrap; }
  .tapa .caption { background: #f4f4f4; }
  .pill { width: 31px; height: 9px; margin-right: 9.500px; border-radius: 5px; background: #7d7d7d; color: #fff; font: 700 5.200px/9px Lato, sans-serif; text-align: center; }
  .menu { width: 8px; height: 8px; margin-left: 3px; border-radius: 50%; background: #fff; box-shadow: 0 0 1.500px #aaa; font-size: 5px; line-height: 7.500px; text-align: center; }
  .legend > svg { width: 184px; height: 19px; margin-top: -.8px; }
  .chat { position: absolute; left: 850px; top: 277px; display: grid; place-items: center; width: 28px; height: 28px; border-radius: 50%; background: #0d76a8; box-shadow: 0 1px 8px #00000030; }
  .chat svg { width: 12.500px; height: 14px; }
  .orient { position: absolute; left: 781.300px; top: 300.300px; width: 103.300px; height: 103.300px; overflow: visible; }
  .ctl { fill: none; stroke: #666; stroke-width: 2; }
  .wire { fill: none; stroke: #858585; stroke-width: 1.700; }
  .ax { fill: none; stroke-width: 2; }
  .r { stroke: #e88080; }
  .g { stroke: #63dd63; }
  .b { stroke: #7070d8; }
  .al { font-size: 22px; text-anchor: middle; font-family: Inter, sans-serif; }
  .face { font-size: 14px; text-anchor: middle; fill: #777; font-family: Inter, sans-serif; letter-spacing: .5px; }
  .sm { font-size: 11px; }
</style>
